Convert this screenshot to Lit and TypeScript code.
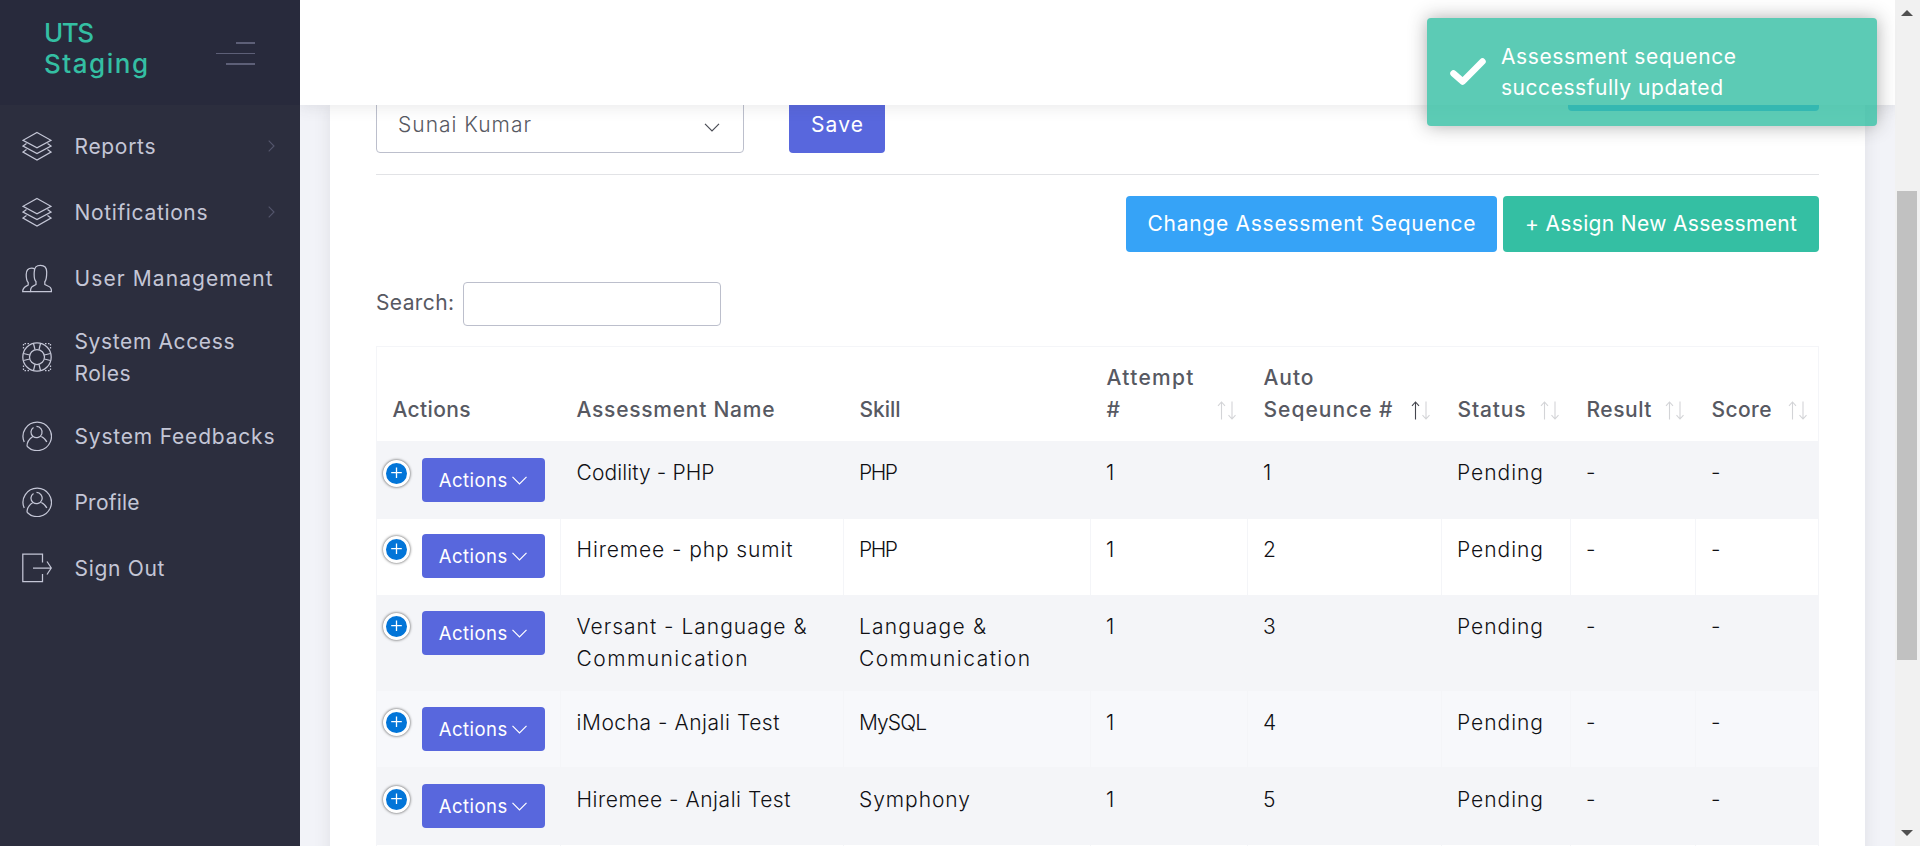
import { LitElement, html, css, svg, nothing } from "lit";
import { customElement, property } from "lit/decorators.js";

/* A run of text tracked out so that its advance equals a given width. */
@customElement("ui-text")
class UiText extends LitElement {
  @property() text = "";
  @property({ type: Number }) span = 0;

  static styles = css`
    :host { display: inline-block; white-space: pre; }
    .run { display: inline-block; }
  `;

  updated() {
    const run = this.renderRoot.querySelector(".run") as HTMLElement;
    if (!run || !this.span) return;
    run.style.letterSpacing = "0px";
    const natural = run.getBoundingClientRect().width;
    const n = this.text.length;
    if (n > 1) {
      const gap = (this.span + 1 - natural) / (n - 1);
      run.style.letterSpacing = `${gap.toFixed(3)}px`;
      run.style.marginRight = `${(-gap).toFixed(3)}px`;
    }
  }

  render() {
    return html`<span class="run">${this.text}</span>`;
  }
}

const t = (text: string, span = 0) => html`<ui-text .text=${text} .span=${span}></ui-text>`;

const icons: Record<string, unknown> = {
  layers: svg`<path d="M15 1.5 29 9.3 15 16.8 1 9.3Z"/><path d="M4.5 12.6 1 15l14 7.6L29 15l-3.500-2.400"/><path d="M4.500 18.600 1 21l14 8 14-8-3.500-2.400"/>`,
  users: svg`<path d="M8.500 28.500C8.500 23 11 23.500 14 21.500V18.500C12 17 12 13.500 12.200 9.500 12.200 4 14.500 2.300 18.500 2.300S24.700 4.500 24.700 9C24.700 13.500 24.500 17 22.800 18.800V21.500C26 23.500 29.500 23 29.500 28.500Z"/><path d="M8.500 28.500H.7C.7 24.500 3 24 6.200 22V19.500C4.500 18 4.200 15 4.200 11.500 4.200 7 6.500 5.200 9.800 5.200 11 5.200 12 5.500 12.700 6"/>`,
  ring: svg`<circle cx="15" cy="15" r="14.200"/><circle cx="15" cy="15" r="7.500"/><path d="M11.500 1.500 13 7.700M18.500 1.500 17 7.700M11.500 28.500 13 22.300M18.500 28.500 17 22.300M1.500 11.500 7.700 13M1.500 18.500 7.700 17M28.500 11.500 22.300 13M28.500 18.500 22.300 17"/><path stroke-dasharray="1.500 1.500" d="M7 1.500H1.500V7M23 1.500H28.500V7M7 28.500H1.500V23M23 28.500H28.500V23"/>`,
  person: svg`<path d="M2.200 21A14.200 14.200 0 1 1 5 25.200"/><path d="M11.500 6.400A5.600 5.600 0 1 0 14.500 5.500M5 25.200C5 20.500 7 18 10.800 15.500M19.300 15.500C22.500 17.200 24 18.800 24.800 21"/>`,
  exit: svg`<path d="M20.500 9.500V1.200H.8V28.500H20.500V21M11 15H29M25 8.500 29.300 15 25 21.500"/>`,
};
const icon = (name: string) => html`<svg class="icon" viewBox="0 0 30 30" width="30" height="30">${icons[name]}</svg>`;

const menu = [
  { icon: "layers", lines: [["Reports", 80]], more: true },
  { icon: "layers", lines: [["Notifications", 132]], more: true },
  { icon: "users", lines: [["User Management", 197]] },
  { icon: "ring", lines: [["System Access", 159], ["Roles", 55]] },
  { icon: "person", lines: [["System Feedbacks", 199]] },
  { icon: "person", lines: [["Profile", 64]] },
  { icon: "exit", lines: [["Sign Out", 89]] },
] as { icon: string; lines: [string, number][]; more?: boolean }[];

const heads = [
  { lines: [["Actions", 77]] },
  { lines: [["Assessment Name", 197]] },
  { lines: [["Skill", 40]] },
  { lines: [["Attempt", 86], ["#", 0]], sort: "none" },
  { lines: [["Auto", 49], ["Seqeunce #", 128]], sort: "asc" },
  { lines: [["Status", 67]], sort: "none" },
  { lines: [["Result", 64]], sort: "none" },
  { lines: [["Score", 59]], sort: "none" },
] as { lines: [string, number][]; sort?: string }[];

const rows = [
  { name: [["Codility - PHP", 137]], skill: [["PHP", 38]], seq: "1" },
  { name: [["Hiremee - php sumit", 215]], skill: [["PHP", 38]], seq: "2" },
  { name: [["Versant - Language &", 229], ["Communication", 170]], skill: [["Language &", 126], ["Communication", 170]], seq: "3" },
  { name: [["iMocha - Anjali Test", 202]], skill: [["MySQL", 67]], seq: "4", hover: true },
  { name: [["Hiremee - Anjali Test", 213]], skill: [["Symphony", 110]], seq: "5" },
  { name: [], skill: [], seq: "" },
] as { name: [string, number][]; skill: [string, number][]; seq: string; hover?: boolean }[];

const lines = (ls: [string, number][]) => ls.map(([s, w]) => html`<div>${t(s, w)}</div>`);

@customElement("app-root")
class AppRoot extends LitElement {
  static styles = css`
    :host { display: block; height: 846px; overflow: hidden; font-family: Inter, "Open Sans", sans-serif; font-size: 21px; line-height: 32px; font-weight: 300; color: #575962; }
    * { box-sizing: border-box; }
    svg { display: block; flex: none; fill: none; }
    .page { display: grid; grid-template-columns: 300px minmax(0, 1fr) 25px; height: 846px; }

    .side { background: #2c2e3e; position: relative; z-index: 2; }
    .brand { height: 105px; background: #282a3c; display: flex; justify-content: space-between; padding: 17px 45px 0 44px; color: #34bfa3; font-weight: 500; font-size: 26px; line-height: 31px; }
    .burger { display: flex; flex-direction: column; align-items: flex-end; gap: 9px; margin-top: 25px; }
    .bar { height: 2px; background: #5d5f77; width: 19px; }
    .bar.thin { height: 1px; width: 39px; }
    .bar.mid { width: 29px; }
    .menu { padding-top: 8px; font-weight: 400; color: #c4c6d6; }
    .item { display: flex; align-items: center; min-height: 66px; padding: 13.500px 25px 13.500px 22px; gap: 22.500px; }
    .item .label { flex: 1; margin-right: -8px; padding-top: 1px; line-height: 32px; }
    .item .icon { stroke: #c4c6d6; stroke-width: 1.25; }
    .more { stroke: #54566c; stroke-width: 1.1; }

    .main { display: flex; flex-direction: column; height: 846px; min-width: 0; }
    .top { height: 105px; flex: none; background: #fff; position: relative; z-index: 1; box-shadow: 0 1px 15px 1px rgba(69, 65, 78, .12); }
    .body { flex: 1; min-height: 0; overflow: hidden; background: #f2f3f8; padding: 0 30px; }
    .card { height: 760px; background: #fff; padding: 0 46px; box-shadow: 0 1px 15px 1px rgba(69, 65, 78, .1); }
    .form { display: flex; height: 48px; align-items: flex-end; }
    .select { width: 368px; height: 56px; border: 1px solid #bcbfcc; border-radius: 4px; display: flex; align-items: center; justify-content: space-between; padding: 0 23px 0 21px; margin-right: 45px; }
    .select svg { margin-top: 4px; }
    .btn { display: flex; align-items: center; justify-content: center; height: 56px; border-radius: 4px; color: #fff; font-weight: 400; }
    .save { width: 96px; background: #5867dd; padding-bottom: 1px; }
    .add { width: 251px; height: 54px; background: #36a3f7; align-self: flex-start; margin: -48px 0 0 auto; }
    .rule { height: 1px; background: #e2e3e6; margin: 21px 0; }
    .tools { display: flex; justify-content: flex-end; gap: 6px; height: 56px; }
    .tools .btn { padding-bottom: 1px; }
    .change { width: 371px; background: #36a3f7; }
    .assign { width: 316px; background: #34bfa3; }
    .search { display: flex; gap: 8px; margin: 30px 0 20px; height: 44px; line-height: 41px; font-weight: 400; }
    .field { width: 258px; height: 44px; border: 1px solid #bcbfcc; border-radius: 4px; margin-left: 1px; }

    .table { border-right: 1px solid #f4f5f8; }
    .row { display: grid; grid-template-columns: 184px 283px 247px 157px 194px 129px 125px 1fr; height: 76.750px; border-top: 1px solid #f4f5f8; color: #101014; }
    .row.tall { height: 95.800px; }
    .row:nth-child(even) { background: #f4f5f8; }
    .row.hover { background: #f7f8fb; }
    .cell { border-left: 1px solid #f4f5f8; padding: 15.300px 0 0 15.500px; min-width: 0; }
    .cell:nth-child(n + 3) { padding-left: 15px; }
    .row.head { color: #575962; font-weight: 500; height: 95.200px; }
    .head .cell { border-left-color: transparent; display: flex; align-items: flex-end; justify-content: space-between; padding: 15px 10px 15px 15.500px; }
    .head .cell:first-child { border-left-color: #f4f5f8; }
    .sort { margin-bottom: 6px; stroke: #d3d4d7; stroke-width: 1.1; }
    .sort .on { stroke: #44464e; }
    .cell.act { display: flex; align-items: flex-start; padding: 15.500px 0 0 5px; gap: 12px; }
    .plus { width: 27px; height: 27px; border-radius: 50%; background: #0275d8; border: 3px solid #fff; box-shadow: 0 0 3px #444; margin-top: 2px; margin-left: .5px; display: flex; align-items: center; justify-content: center; }
    .plus svg { stroke: #fff; stroke-width: 1.3; }
    .btn.small { width: 123px; height: 44px; background: #5867dd; font-size: 18.500px; gap: 5px; }
    .small svg { margin-top: 1px; }

    .scroll { background: #f1f1f1; display: flex; flex-direction: column; align-items: center; justify-content: space-between; padding: 10px 1px 10px 0; position: relative; z-index: 2; }
    .thumb { width: 20px; height: 469px; background: #c1c1c1; }
    .scroll svg { fill: #505050; }
    .gap-a { height: 175px; }
    .gap-b { height: 170px; }

    .toast { position: absolute; z-index: 5; left: 1427px; top: 18px; width: 450px; height: 108px; border-radius: 4px; background: #34bfa3; opacity: .8; box-shadow: 0 0 18px #999; display: flex; padding: 23px 0 0 23px; gap: 15px; color: #fff; font-weight: 400; line-height: 31px; }
    .toast svg { margin-top: 16px; }
  `;

  chev(color: string, w = 15) {
    return html`<svg width=${w} height="9" viewBox="0 0 15 9" stroke=${color} stroke-width="1.2"><path d="M.5 .8 7.500 8 14.500 .8"/></svg>`;
  }

  sort(kind: string) {
    return html`<svg class="sort" width="20" height="19" viewBox="0 0 20 19">
      <path class=${kind === "asc" ? "on" : "off"} d="M4.500 18.500V1M1 4.800 4.500 1 8 4.800"/>
      <path d="M15 .5V18M11.500 14.200 15 18 18.500 14.200"/></svg>`;
  }

  row(r: (typeof rows)[number]) {
    return html`<div class="row ${r.hover ? "hover" : ""} ${r.name.length > 1 ? "tall" : ""}">
      <div class="cell act">
        ${r.seq ? html`<div class="plus"><svg width="11" height="13" viewBox="0 0 11 13"><path d="M5.500 .5V11M.2 5.700H10.800"/></svg></div>
        <div class="btn small">${t("Actions", 67.5)}${this.chev("#fff")}</div>` : nothing}
      </div>
      <div class="cell">${lines(r.name)}</div>
      <div class="cell">${lines(r.skill)}</div>
      <div class="cell">${r.seq ? "1" : ""}</div>
      <div class="cell">${r.seq}</div>
      <div class="cell">${r.seq ? t("Pending", 85) : ""}</div>
      <div class="cell">${r.seq ? "-" : ""}</div>
      <div class="cell">${r.seq ? "-" : ""}</div>
    </div>`;
  }

  render() {
    return html`<div class="page">
      <nav class="side">
        <div class="brand">
          <div>${lines([["UTS", 49], ["Staging", 103]])}</div>
          <div class="burger"><div class="bar"></div><div class="bar thin"></div><div class="bar mid"></div></div>
        </div>
        <div class="menu">
          ${menu.map((m) => html`<div class="item">${icon(m.icon)}<div class="label">${lines(m.lines)}</div>
            ${m.more ? html`<svg class="more" width="7" height="12" viewBox="0 0 7 12"><path d="M.7 .7 6 6 .7 11.300"/></svg>` : nothing}</div>`)}
        </div>
      </nav>
      <main class="main">
        <div class="top"></div>
        <div class="body">
          <div class="card">
            <div class="form">
              <div class="select">${t("Sunai Kumar", 132)}${this.chev("#4a4c55", 16)}</div>
              <div class="btn save">${t("Save", 51)}</div>
              <div class="btn add"></div>
            </div>
            <div class="rule"></div>
            <div class="tools">
              <div class="btn change">${t("Change Assessment Sequence", 327)}</div>
              <div class="btn assign">${t("+ Assign New Assessment", 271)}</div>
            </div>
            <div class="search">${t("Search:", 77)}<div class="field"></div></div>
            <div class="table">
              <div class="row head">
                ${heads.map((h) => html`<div class="cell"><div>${lines(h.lines)}</div>${h.sort ? this.sort(h.sort) : nothing}</div>`)}
              </div>
              ${rows.map((r) => this.row(r))}
            </div>
          </div>
        </div>
      </main>
      <div class="scroll">
        <svg width="12" height="6" viewBox="0 0 12 6"><path d="M0 6 6 0 12 6Z"/></svg>
        <div class="gap-a"></div><div class="thumb"></div><div class="gap-b"></div>
        <svg width="12" height="6" viewBox="0 0 12 6"><path d="M0 0 6 6 12 0Z"/></svg>
      </div>
      <div class="toast">
        <svg width="36" height="30" viewBox="0 0 36 30" stroke="#fff" stroke-width="6.500" stroke-linecap="round" stroke-linejoin="round"><path d="M3.500 16.500 12.700 24.500 32.500 4.500"/></svg>
        <div>${lines([["Assessment sequence", 234], ["successfully updated", 221]])}</div>
      </div>
    </div>`;
  }
}
